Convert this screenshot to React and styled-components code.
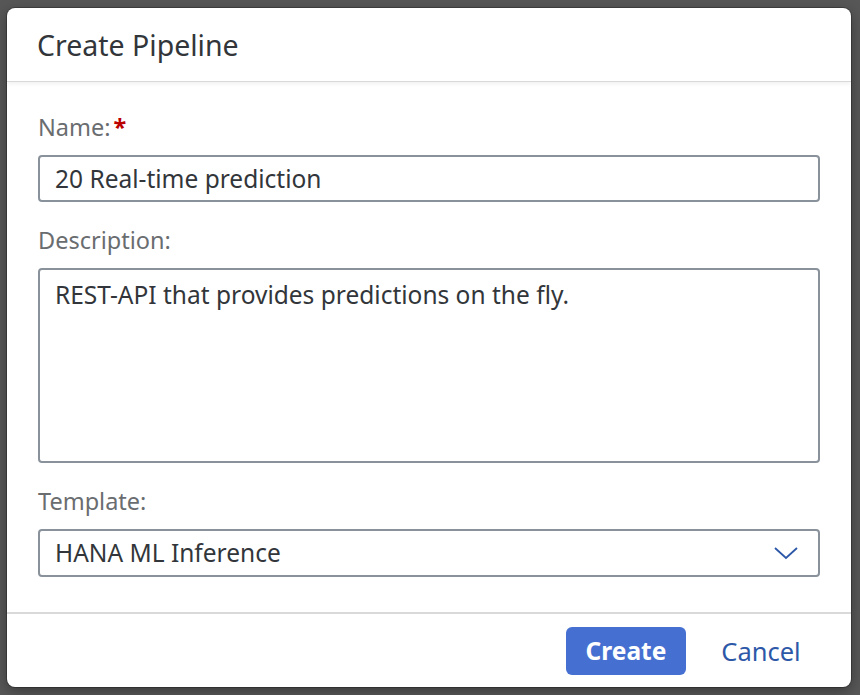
import React from 'react'
import styled, { createGlobalStyle } from 'styled-components'

const GlobalStyle = createGlobalStyle`
  html, body {
    margin: 0;
    padding: 0;
    background: #565656;
    font-family: "Noto Sans", "Liberation Sans", sans-serif;
  }
`

const Backdrop = styled.div`
  width: 860px;
  height: 695px;
  background: #575757;
  display: flex;
  padding: 8px 9px 8px 7px;
  box-sizing: border-box;
  overflow: hidden;
`

const Dialog = styled.div`
  flex: 1;
  background: #fff;
  border-radius: 8px;
  display: flex;
  flex-direction: column;
  box-shadow: 0 0 0 1px rgba(0, 0, 0, 0.25), 0 4px 14px rgba(0, 0, 0, 0.35);
  overflow: hidden;
`

const Header = styled.header`
  height: 74px;
  box-sizing: border-box;
  display: flex;
  align-items: center;
  padding: 0 30px;
  border-bottom: 1px solid #d9d9d9;
  box-shadow: 0 2px 4px rgba(0, 0, 0, 0.06);
  position: relative;
  z-index: 1;

  h1 {
    margin: 0;
    font-size: 28.5px;
    font-weight: 400;
    color: #32363a;
  }
`

const Body = styled.div`
  flex: 1;
  padding: 29px 31px 0 31px;
  display: flex;
  flex-direction: column;
  gap: 22px;
`

const Field = styled.div`
  display: flex;
  flex-direction: column;
  gap: 12px;
`

const Label = styled.label`
  font-size: 23.5px;
  line-height: 32px;
  color: #6a6d70;

  span {
    color: #bb0000;
    font-weight: 700;
    margin-left: 3px;
  }
`

const Control = styled.div`
  height: ${({ $h }) => $h}px;
  box-sizing: border-box;
  border: 2px solid #89919a;
  border-radius: 4px;
  display: flex;
  align-items: ${({ $top }) => ($top ? 'flex-start' : 'center')};
  justify-content: space-between;
  padding: ${({ $top }) => ($top ? '10px 15px' : '0 15px')};
  font-size: 24.5px;
  line-height: 30px;
  color: #32363a;
`

const Chevron = styled.svg`
  width: 26px;
  height: 16px;
  margin-right: 4px;
`

const Footer = styled.footer`
  height: 75px;
  box-sizing: border-box;
  border-top: 2px solid #d9d9d9;
  display: flex;
  align-items: center;
  justify-content: flex-end;
  padding: 0 31px 0 0;
  gap: 16px;
`

const Button = styled.button`
  height: 48px;
  width: ${({ $w }) => $w}px;
  padding: 0;
  border: none;
  border-radius: 6px;
  font-family: inherit;
  font-size: ${({ $primary }) => ($primary ? 24.5 : 25.5)}px;
  cursor: pointer;
  background: ${({ $primary }) => ($primary ? '#4570d1' : 'transparent')};
  color: ${({ $primary }) => ($primary ? '#fff' : '#2d58a8')};
  font-weight: ${({ $primary }) => ($primary ? 700 : 400)};
`

const App = () => {
  return (
    <>
      <GlobalStyle />
      <Backdrop>
        <Dialog>
          <Header>
            <h1>Create Pipeline</h1>
          </Header>
          <Body>
            <Field>
              <Label>Name:<span>*</span></Label>
              <Control $h={47}>20 Real-time prediction</Control>
            </Field>
            <Field>
              <Label>Description:</Label>
              <Control $h={195} $top>REST-API that provides predictions on the fly.</Control>
            </Field>
            <Field>
              <Label>Template:</Label>
              <Control $h={48}>
                HANA ML Inference
                <Chevron viewBox="0 0 26 16">
                  <path d="M2 3 L13 13 L24 3" fill="none" stroke="#2d58a8" strokeWidth="1.8" />
                </Chevron>
              </Control>
            </Field>
          </Body>
          <Footer>
            <Button $primary $w={120}>Create</Button>
            <Button $w={118}>Cancel</Button>
          </Footer>
        </Dialog>
      </Backdrop>
    </>
  )
}

export default App
